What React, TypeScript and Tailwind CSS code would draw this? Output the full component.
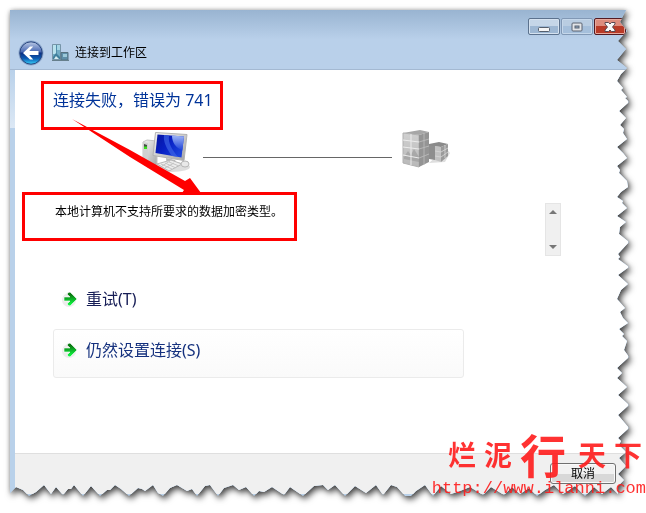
import React from "react";

type Point = [number, number];

// Torn right edge: [distance from the right side, y]
const tornRight: Point[] = [
  [3, 0], [9, 12], [2, 21], [11, 31], [3, 39], [12, 50], [2, 58], [8, 64], [12, 71], [6, 78],
  [8, 80], [2, 87], [4, 88], [0, 92], [10, 101], [3, 108], [9, 115], [5, 119], [6, 123], [2, 129],
  [12, 137], [6, 143], [2, 148], [12, 156], [9, 160], [10, 163], [2, 171], [1, 177], [8, 182],
  [12, 187], [6, 191], [7, 193], [2, 198], [12, 206], [3, 212], [9, 217], [10, 224], [0, 232],
  [11, 244], [9, 247], [11, 249], [0, 257], [11, 265], [1, 274], [8, 280], [12, 289], [4, 298],
  [9, 302], [6, 308], [1, 313], [10, 319], [5, 324], [7, 326], [2, 331], [5, 340], [0, 347],
  [12, 358], [7, 363], [12, 368], [2, 377], [11, 385], [0, 395], [11, 405], [0, 418], [11, 428],
  [8, 431], [10, 435], [3, 442], [10, 448], [3, 456], [11, 464], [5, 470], [11, 476],
];

// Torn bottom edge: [x, distance from the bottom]
const tornBottom: Point[] = [
  [0, 3], [6, 9], [13, 6], [19, 0], [26, 4], [34, 11], [41, 2], [46, 9], [53, 1], [58, 7],
  [61, 7], [64, 11], [73, 0], [81, 10], [90, 0], [97, 6], [100, 6], [105, 11], [111, 7], [119, 0],
  [128, 8], [132, 7], [135, 5], [143, 11], [148, 3], [153, 0], [160, 8], [167, 11], [172, 8],
  [177, 5], [182, 7], [187, 0], [195, 10], [200, 11], [208, 0], [214, 8], [223, 11], [229, 6],
  [236, 9], [244, 0], [249, 5], [254, 4], [262, 9], [274, 1], [280, 9], [293, 0], [304, 10],
  [313, 11], [318, 6], [325, 11], [335, 0], [345, 10], [356, 3], [366, 11], [373, 1], [381, 11],
  [387, 9], [395, 0], [401, 0], [406, 5], [415, 11], [423, 0], [431, 10], [441, 2], [450, 5],
  [460, 9], [473, 1], [481, 9], [494, 1], [502, 9], [510, 2], [519, 8], [527, 0], [535, 6],
  [544, 11], [553, 2], [565, 10], [575, 0], [584, 9], [592, 2], [601, 9], [608, 2],
];

const tornClip = `polygon(${[
  "0px 0px",
  ...tornRight.map(([r, y]) => `calc(100% - ${r}px) ${y}px`),
  ...[...tornBottom].reverse().map(([x, b]) => `${x}px calc(100% - ${b}px)`),
].join(", ")})`;

function BackIcon() {
  return (
    <svg width="26" height="26" viewBox="0 0 26 26" aria-hidden="true">
      <defs>
        <linearGradient id="orb" x1="0" y1="0" x2="0" y2="1">
          <stop offset="0" stopColor="#b9c8e4" />
          <stop offset=".45" stopColor="#4a6ab4" />
          <stop offset=".5" stopColor="#0b2f83" />
          <stop offset=".75" stopColor="#0c5db4" />
          <stop offset="1" stopColor="#39d4fb" />
        </linearGradient>
      </defs>
      <circle cx="13" cy="13" r="12.5" fill="#8aa5cb" />
      <circle cx="13" cy="13" r="11.2" fill="url(#orb)" stroke="#29477f" />
      <path d="M5 13 12 6.5h3.200l-4 4.600h9.300v3.900h-9.300l4 4.500H12z" fill="#fff" />
    </svg>
  );
}

function WorkplaceIcon() {
  return (
    <svg width="17" height="17" viewBox="0 0 17 17" aria-hidden="true">
      <path d="M.5.5h8v15h-8z" fill="#72acc5" stroke="#7795a8" />
      <path d="M1 1h3v9H1z" fill="#b9e2ed" />
      <path d="M5 1h3v5H5z" fill="#a5d5e5" />
      <path d="M4.500 1v14" stroke="#528da8" />
      <path d="M1 13l3-4 4 4v2H1z" fill="#3f7f9c" />
      <path d="M2 15l2-3 3 3z" fill="#d5edf2" />
      <path d="M9 8.500h7V16H9z" fill="#5f8fa9" stroke="#56717f" />
      <path d="M11 10h4v3h-4z" fill="#9cc9d9" />
      <path d="M0 16.500h17" stroke="#667f8c" />
    </svg>
  );
}

function ComputerIcon() {
  return (
    <svg width="50" height="44" viewBox="0 0 50 44" aria-hidden="true">
      <defs>
        <linearGradient id="screen" x1="0" y1="0" x2="1" y2=".6">
          <stop offset="0" stopColor="#0614a0" />
          <stop offset=".5" stopColor="#0820c4" />
          <stop offset="1" stopColor="#1b43dc" />
        </linearGradient>
        <linearGradient id="sheen" x1="0" y1="0" x2="0" y2="1">
          <stop offset="0" stopColor="#9db4f5" />
          <stop offset="1" stopColor="#1a3fd8" />
        </linearGradient>
        <linearGradient id="metal" x1="0" y1="0" x2="1" y2="1">
          <stop offset="0" stopColor="#f5f5f5" />
          <stop offset="1" stopColor="#a4a4a4" />
        </linearGradient>
      </defs>
      <ellipse cx="30" cy="37" rx="18" ry="5" fill="#aaa" opacity=".4" />
      <path d="M1 12 5 10l10 1v24l-9 2-5-3z" fill="url(#metal)" stroke="#c4c4c4" />
      <path d="M1 12l5 1v24l-5-3z" fill="#d0d0d0" />
      <path d="M2 14l3 1v4l-3-1z" fill="#424c42" />
      <path d="M2 16.500h3v2.500H2z" fill="#39e01e" />
      <path d="M24 28l9 2 3 5-11 1z" fill="#b6b6b6" />
      <path d="M13.500 2.500 45 4.500l-3 26-31-5z" fill="url(#metal)" stroke="#b2b2b2" />
      <path d="M15.500 4.500 42 6.500l-2.500 21L13.500 23z" fill="url(#screen)" />
      <path d="M30 5.600l12 .9-1.700 14C34 18 30 13 30 5.600z" fill="url(#sheen)" />
      <path d="M22 5l5 .5c-1 8 3 14 9 21.500l-6-1C25 19 21 12 22 5z" fill="#3c62e4" opacity=".7" />
      <path d="M15 34l14-4 11 4-13 7z" fill="#ededed" stroke="#b7b7b7" />
      <path d="M19 34l11 5m-7-6 11 5m-7-6 10 4m-9-5-8 5m12-3-9 5" stroke="#c4c4c4" />
      <ellipse cx="43" cy="34" rx="4" ry="3" fill="#e9e9e9" stroke="#b7b7b7" />
    </svg>
  );
}

function BuildingsIcon() {
  return (
    <svg width="49" height="38" viewBox="0 0 49 38" aria-hidden="true">
      <defs>
        <linearGradient id="glass" x1="0" y1="0" x2="0" y2="1">
          <stop offset="0" stopColor="#d0d0d0" />
          <stop offset="1" stopColor="#b8b8b8" />
        </linearGradient>
      </defs>
      <path d="M27 33l16-1 5-9-4-5z" fill="#dedede" />
      <path d="M27 14l10-2 9 2-7 3-12-1z" fill="#8a8a8a" />
      <path d="M27 15l6 1v14l-6-1z" fill="#8e8e8e" />
      <path d="M33 16l6 1v15l-6-2z" fill="#c2c2c2" />
      <path d="M39 17l7-3v12l-7 6z" fill="#9a9a9a" />
      <path d="M33 21l6 1 7-4M33 26l6 1 7-5M43 15v13" stroke="#d8d8d8" strokeWidth=".8" fill="none" />
      <path d="M1 3l17-3 9 2-10 3z" fill="#a6a6a6" />
      <path d="M1 3l16 2v32L1 33z" fill="url(#glass)" stroke="#b0b0b0" />
      <path d="M17 5l10-3v30l-10 5z" fill="#949494" />
      <path d="M2 27l4-6 3 4 3-6 5 8v5l-15-3z" fill="#979797" opacity=".6" />
      <path d="M9 4v31M1 10l16 2M1 17l16 2M1 25l16 3" stroke="#ececec" fill="none" />
      <path d="M17 12l10-3M17 19l10-3M17 28l10-4M22 4v31" stroke="#bebebe" strokeWidth=".8" fill="none" />
    </svg>
  );
}

function GreenArrow() {
  return (
    <svg width="16" height="16" viewBox="0 0 16 16" className="shrink-0" aria-hidden="true">
      <defs>
        <linearGradient id="go" x1="0" y1="0" x2="0" y2="1">
          <stop offset=".2" stopColor="#0b7a12" />
          <stop offset=".85" stopColor="#0ff03f" />
        </linearGradient>
      </defs>
      <circle cx="7" cy="9" r="7" fill="#ececec" />
      <path d="M2 6h6L5.500 3.500V2L8 1l7 7-7 7-2.500-1v-1.500L8 10H2z" fill="url(#go)" stroke="#fff" strokeWidth=".6" />
    </svg>
  );
}

function CommandLink({ label, framed }: { label: string; framed?: boolean }) {
  return (
    <button
      className={
        framed
          ? "flex h-[49px] items-start gap-2 rounded-[3px] border border-[#ebebeb] bg-linear-to-b from-white to-[#fafafa] px-2 pt-2 text-left text-base leading-6 text-[#15317e]"
          : "flex h-[49px] items-start gap-2 rounded-[3px] border border-transparent px-2 pt-2 text-left text-base leading-6 text-[#151c55]"
      }
    >
      <span className="flex h-6 items-center"><GreenArrow /></span>
      {label}
    </button>
  );
}

function WindowControls() {
  return (
    <div className="flex justify-end gap-[1px] pr-[2px]">
      <button aria-label="最小化" className="flex h-[17px] w-8 items-center justify-center rounded-[2px] border border-[#5c728e] bg-linear-to-b from-[#c5d6e8] from-50% to-[#9db7d3] to-50% shadow-[inset_0_0_0_1px_#d5e2f0]">
        <svg width="12" height="12" aria-hidden="true"><rect x=".5" y="6.5" width="11" height="4" rx="1" fill="#f5f5f5" stroke="#555f6d" /></svg>
      </button>
      <button aria-label="最大化" className="flex h-[17px] w-8 items-center justify-center rounded-[2px] border border-[#8198b5] bg-linear-to-b from-[#b9cde2] from-50% to-[#a5bfdb] to-50% shadow-[inset_0_0_0_1px_#c5d7ea]">
        <svg width="12" height="10" aria-hidden="true"><rect x="1" y="1" width="10" height="8" rx="1" fill="#e1e4e8" stroke="#5a6370" /><rect x="4" y="4" width="4" height="2" fill="#8ca6c2" stroke="#5a6370" /></svg>
      </button>
      <button aria-label="关闭" className="flex h-[17px] w-8 items-center justify-center rounded-[2px] border border-[#541a22] bg-linear-to-b from-[#dd8c7d] from-50% to-[#b93a27] to-50% shadow-[inset_0_0_0_1px_#e7a99d]">
        <svg width="12" height="10" viewBox="0 0 12 10" aria-hidden="true"><path d="M1 .5h3.500L6 2 7.500.500H11V2L8.500 5 11 8v1.500H7.500L6 8 4.500 9.500H1V8l2.500-3L1 2z" fill="#f8f8f8" stroke="#584851" /></svg>
      </button>
    </div>
  );
}

function Annotations() {
  return (
    <svg width="300" height="250" className="pointer-events-none absolute top-0 left-0" aria-hidden="true">
      <g fill="none" stroke="#f00" strokeWidth="3">
        <rect x="42.5" y="82.5" width="179" height="46" />
        <rect x="23.5" y="193.5" width="272" height="46" />
      </g>
      <path d="M72 119 130 150 185 181 190 178 201 193H182L184 190 130 157Z" fill="#f00" />
    </svg>
  );
}

function Watermark() {
  return (
    <div className="pointer-events-none absolute right-0 bottom-[14px] flex flex-col items-end text-[#ff1c1c] opacity-90">
      <div className="flex h-12 items-center gap-2 pr-1 font-bold">
        <span className="text-[28px] leading-[28px]">烂</span>
        <span className="text-[28px] leading-[28px]">泥</span>
        <span className="text-[46px] leading-[46px]">行</span>
        <span className="ml-1 text-[28px] leading-[28px]">天</span>
        <span className="text-[28px] leading-[28px]">下</span>
      </div>
      <div className="font-['Liberation_Mono',monospace] text-[17px] leading-5">http://www.ilanni.com</div>
    </div>
  );
}

export default function App() {
  return (
    <div className="relative flex min-h-screen flex-col overflow-hidden bg-white pt-[10px] pr-[17px] pb-[17px] pl-[10px] font-['Noto_Sans','Noto_Sans_CJK_SC',sans-serif] text-black">
      <div className="flex flex-1 flex-col [filter:drop-shadow(0_0_2px_rgba(0,0,0,0.2))_drop-shadow(2px_3px_3px_rgba(0,0,0,0.7))]">
        <div className="flex flex-1 flex-col bg-[#b9d1ea] pr-[1px] pb-[2px]" style={{ clipPath: tornClip }}>
          <header className="h-[60px] border-b border-[#a4b9d2] bg-linear-to-b from-[#99b4d1] to-[#b9d0ea] to-50% pt-2">
            <WindowControls />
            <div className="flex h-[35px] items-center pl-2">
              <button aria-label="返回"><BackIcon /></button>
              <span className="ml-2"><WorkplaceIcon /></span>
              <h1 className="ml-[6px] text-xs">连接到工作区</h1>
            </div>
          </header>

          <div className="flex flex-1 flex-col bg-[linear-gradient(#b9d1ea,#dce8f5_58px,#b9d1ea_58px)] pl-[5px]">
            <main className="flex-1 bg-white pt-[18px] pr-[67px] pb-4 pl-[38px]">
              <h2 className="text-base leading-6 text-[#003399]">连接失败，错误为 741</h2>

              <div className="mt-[18px] flex h-[44px] items-start pr-[110px] pl-[89px]">
                <ComputerIcon />
                <div className="mr-[10px] ml-[11px] mt-[27px] h-px flex-1 bg-[#666]" />
                <BuildingsIcon />
              </div>

              <div className="mt-[29px] flex h-[53px]">
                <p className="flex-1 pl-[2px] text-xs leading-[18px]">本地计算机不支持所要求的数据加密类型。</p>
                <div className="flex w-4 flex-col items-center justify-between border border-[#e5e5e5] bg-[#f0f0f0] py-[6px]">
                  <svg width="8" height="4" aria-hidden="true"><path d="M0 4l4-4 4 4z" fill="#777" /></svg>
                  <svg width="8" height="4" aria-hidden="true"><path d="M0 0h8L4 4z" fill="#777" /></svg>
                </div>
              </div>

              <div className="mt-[22px] mr-[97px] flex flex-col gap-[2px]">
                <CommandLink label="重试(T)" />
                <CommandLink label="仍然设置连接(S)" framed />
              </div>
            </main>

            <footer className="flex h-[41px] items-start justify-end border-t border-[#dfdfdf] bg-[#f0f0f0] pt-[9px] pr-3">
              <button className="h-[21px] w-[66px] rounded-[3px] border border-[#707070] bg-linear-to-b from-[#f2f2f2] from-50% to-[#d8d8d8] to-50% text-xs leading-[19px] shadow-[inset_0_0_0_1px_#fafafa]">
                取消
              </button>
            </footer>
          </div>
        </div>
      </div>

      <Annotations />
      <Watermark />
    </div>
  );
}
